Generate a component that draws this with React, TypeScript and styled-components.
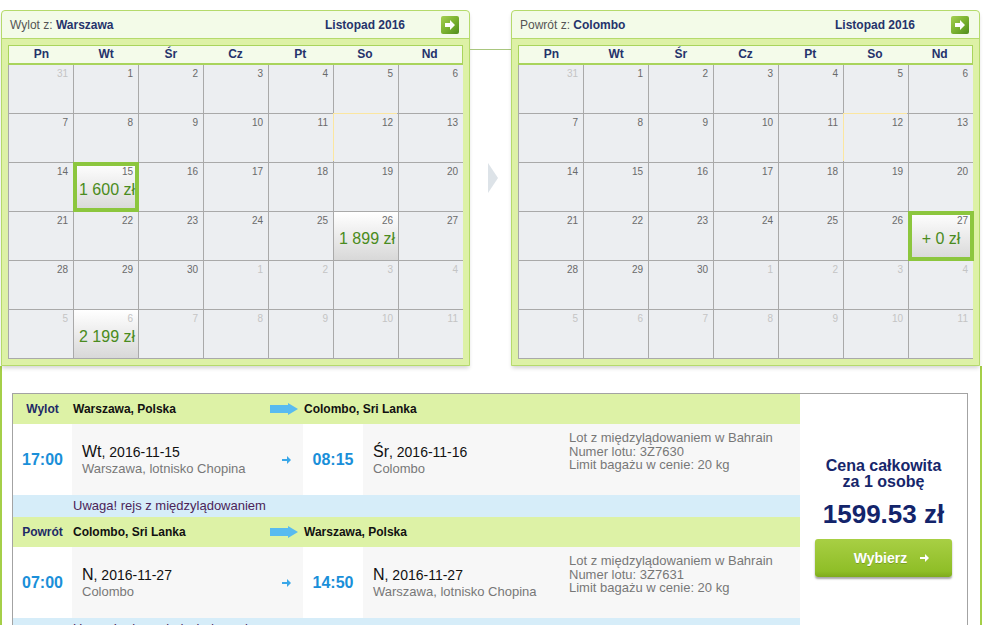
import React from 'react';
import styled, { createGlobalStyle } from 'styled-components';

const GlobalStyle = createGlobalStyle`
  body {
    margin: 0;
    background: #fff;
    font-family: "Liberation Sans", Arial, sans-serif;
  }
`

type Cell = {
  day: number
  other?: boolean
  price?: string
  selected?: boolean
  mark?: boolean
}

function buildMonth(prices: Record<string, { price: string; selected?: boolean }>): Cell[] {
  const cells: Cell[] = [{ day: 31, other: true }]
  for (let d = 1; d <= 30; d++) cells.push({ day: d, mark: d === 12 })
  for (let d = 1; d <= 11; d++) cells.push({ day: d, other: true })
  return cells.map((c) => {
    const key = (c.other ? 'o' : '') + c.day
    const p = prices[key]
    return p ? { ...c, price: p.price, selected: p.selected } : c
  })
}

const departCells = buildMonth({
  '15': { price: '1 600 zł', selected: true },
  '26': { price: '1 899 zł' },
  o6: { price: '2 199 zł' },
})

const returnCells = buildMonth({
  '27': { price: '+ 0 zł', selected: true },
})

const weekDays = ['Pn', 'Wt', 'Śr', 'Cz', 'Pt', 'So', 'Nd']

const Page = styled.div`
  width: 984px;
`

const CalendarsRow = styled.div`
  display: flex;
  align-items: flex-start;
  padding: 10px 0 0 1px;
`

const Panel = styled.div`
  width: 469px;
  box-sizing: border-box;
  border: 1px solid #b5da6c;
  border-radius: 4px 4px 0 0;
  background: #ddf1a6;
  box-shadow: 0 3px 4px -1px rgba(0, 0, 0, 0.18);
`

const PanelHeader = styled.div`
  display: flex;
  align-items: center;
  height: 27px;
  padding: 0 10px 0 8px;
  background: #f3fbe8;
  border-bottom: 1px solid #b5da6c;
  border-radius: 4px 4px 0 0;
`

const Title = styled.div`
  flex: 1;
  font-size: 12px;
  color: #555;

  b {
    color: #25336b;
  }
`

const Month = styled.div`
  font-size: 12px;
  font-weight: bold;
  color: #25336b;
  margin-right: 36px;
`

const NextButton = styled.div`
  width: 18px;
  height: 18px;
  border-radius: 2px;
  background: linear-gradient(135deg, #a6d052 0%, #7bb231 50%, #4f8d1c 100%);
  display: flex;
  align-items: center;
  justify-content: center;
`

const PanelBody = styled.div`
  padding: 6px;
`

const WeekHeader = styled.div`
  display: grid;
  grid-template-columns: repeat(7, 1fr);
  border: 1px solid #a9d45c;
  border-bottom-width: 2px;
  background: #f4fbea;
  height: 17px;
`

const WeekDay = styled.div`
  text-align: center;
  font-size: 12px;
  line-height: 17px;
  font-weight: bold;
  color: #25336b;
`

const DaysGrid = styled.div`
  display: grid;
  grid-template-columns: repeat(7, 64px);
  grid-auto-rows: 48px;
  gap: 1px;
  background: #a9a9a9;
  border: 1px solid #a9a9a9;
  border-top: 0;
`

const Day = styled.div<{ $selected?: boolean; $priced?: boolean; $mark?: boolean }>`
  display: flex;
  flex-direction: column;
  padding: 3px 5px 0;
  background: ${(p) => (p.$priced ? 'linear-gradient(#ffffff, #d8d8d8)' : '#eceef1')};
  box-shadow: ${(p) =>
    p.$selected
      ? '0 0 0 1px #8cc63e, inset 0 0 0 3px #8cc63e'
      : p.$mark
        ? '-1px -1px 0 #fbe6a0'
        : 'none'};
`

const DayNum = styled.div<{ $other?: boolean }>`
  text-align: right;
  font-size: 10px;
  line-height: 12px;
  color: ${(p) => (p.$other ? '#c4c4c4' : '#6a6a6a')};
`

const Price = styled.div`
  margin-top: 3px;
  text-align: center;
  font-size: 16px;
  line-height: 18px;
  color: #4a8b20;
  white-space: nowrap;
`

const Connector = styled.div`
  width: 41px;
  padding-top: 39px;
`

const ConnectorLine = styled.div`
  height: 1px;
  background: #a9c67f;
`

const Chevron = styled.svg`
  display: block;
  margin: 113px 0 0 18px;
`

const Results = styled.div`
  width: 982px;
  box-sizing: border-box;
  border-left: 2px solid #a5cf48;
  border-right: 2px solid #a5cf48;
  padding: 27px 12px 0 10px;
`

const FlightBox = styled.div`
  display: grid;
  grid-template-columns: 1fr 167px;
  border: 1px solid #a3a3a3;
  background: #fff;
`

const Legs = styled.div`
  display: flex;
  flex-direction: column;
`

const legCols = '59px 231px 60px 1fr'

const HeaderRow = styled.div`
  display: grid;
  grid-template-columns: ${legCols};
  align-items: center;
  height: 30px;
  background: #ddf2a6;
  font-size: 12px;
  font-weight: bold;
  color: #111;
`

const LegLabel = styled.div`
  text-align: center;
  color: #1e2a66;
`

const FromCity = styled.div`
  display: flex;
  align-items: center;
  justify-content: space-between;
  padding: 0 5px 0 1px;
`

const ToCity = styled.div`
  grid-column: 3 / 5;
  padding-left: 1px;
`

const DetailRow = styled.div`
  display: grid;
  grid-template-columns: ${legCols};
  height: 71px;
`

const Time = styled.div`
  display: flex;
  align-items: center;
  justify-content: center;
  font-size: 16px;
  font-weight: bold;
  color: #1a8fd9;
  background: #fff;
`

const Stop = styled.div`
  display: flex;
  align-items: center;
  justify-content: space-between;
  padding: 0 12px 0 10px;
  background: #f7f7f7;
`

const ArrivalStop = styled.div`
  display: flex;
  padding-left: 10px;
  background: #f7f7f7;
`

const DateBlock = styled.div`
  align-self: center;
  width: 196px;
  flex-shrink: 0;
`

const DateLine = styled.div`
  font-size: 14px;
  line-height: 18px;
  color: #111;

  span {
    font-size: 16px;
  }
`

const Place = styled.div`
  font-size: 13px;
  line-height: 15px;
  color: #777;
`

const Info = styled.div`
  padding-top: 7px;
  font-size: 13px;
  line-height: 13.6px;
  color: #777;
`

const NoticeRow = styled.div`
  height: 22px;
  line-height: 22px;
  padding-left: 60px;
  background: #d6edf9;
  font-size: 13px;
  color: #4b2458;
`

const PricePanel = styled.div`
  display: flex;
  flex-direction: column;
  align-items: center;
  justify-content: center;
  background: #fff;
`

const PriceLabel = styled.div`
  font-size: 16px;
  line-height: 16px;
  font-weight: bold;
  text-align: center;
  color: #16266b;
`

const Total = styled.div`
  margin-top: 9px;
  font-size: 26px;
  line-height: 30px;
  font-weight: bold;
  color: #13246b;
`

const ChooseButton = styled.div`
  margin-top: 10px;
  width: 137px;
  height: 38px;
  box-sizing: border-box;
  display: flex;
  align-items: center;
  justify-content: center;
  gap: 13px;
  padding-left: 16px;
  border-radius: 3px;
  background: linear-gradient(#a8cf44, #8fbe27 85%, #7eab1c);
  box-shadow: 0 2px 2px rgba(0, 0, 0, 0.35);
  color: #fff;
  font-size: 14px;
  font-weight: bold;
  text-shadow: 0 1px 0 rgba(0, 0, 0, 0.2);
`

const WhiteArrow = () => (
  <svg width="18" height="18" viewBox="0 0 18 18">
    <path d="M4 7h5V4l5 5-5 5v-3H4z" fill="#fff" />
  </svg>
)

const BigArrow = () => (
  <svg width="28" height="12" viewBox="0 0 28 12">
    <path d="M0 2h18V0l10 6-10 6v-2H0z" fill="#58bbf0" />
  </svg>
)

const SmallArrow = ({ color }: { color: string }) => (
  <svg width="9" height="8" viewBox="0 0 9 8">
    <path d="M0 3h5V0l4 4-4 4V5H0z" fill={color} />
  </svg>
)

function Calendar({ label, city, cells }: { label: string; city: string; cells: Cell[] }) {
  return (
    <Panel>
      <PanelHeader>
        <Title>
          {label} <b>{city}</b>
        </Title>
        <Month>Listopad 2016</Month>
        <NextButton>
          <WhiteArrow />
        </NextButton>
      </PanelHeader>
      <PanelBody>
        <WeekHeader>
          {weekDays.map((d) => (
            <WeekDay key={d}>{d}</WeekDay>
          ))}
        </WeekHeader>
        <DaysGrid>
          {cells.map((c, i) => (
            <Day key={i} $selected={c.selected} $priced={!!c.price} $mark={c.mark}>
              <DayNum $other={c.other}>{c.day}</DayNum>
              {c.price && <Price>{c.price}</Price>}
            </Day>
          ))}
        </DaysGrid>
      </PanelBody>
    </Panel>
  )
}

type Leg = {
  label: string
  from: string
  to: string
  depTime: string
  depDay: string
  depDate: string
  depPlace: string
  arrTime: string
  arrDay: string
  arrDate: string
  arrPlace: string
  flight: string
}

const legs: Leg[] = [
  {
    label: 'Wylot',
    from: 'Warszawa, Polska',
    to: 'Colombo, Sri Lanka',
    depTime: '17:00',
    depDay: 'Wt',
    depDate: '2016-11-15',
    depPlace: 'Warszawa, lotnisko Chopina',
    arrTime: '08:15',
    arrDay: 'Śr',
    arrDate: '2016-11-16',
    arrPlace: 'Colombo',
    flight: '3Z7630',
  },
  {
    label: 'Powrót',
    from: 'Colombo, Sri Lanka',
    to: 'Warszawa, Polska',
    depTime: '07:00',
    depDay: 'N',
    depDate: '2016-11-27',
    depPlace: 'Colombo',
    arrTime: '14:50',
    arrDay: 'N',
    arrDate: '2016-11-27',
    arrPlace: 'Warszawa, lotnisko Chopina',
    flight: '3Z7631',
  },
]

export default function App() {
  return (
    <Page>
      <GlobalStyle />
      <CalendarsRow>
        <Calendar label="Wylot z:" city="Warszawa" cells={departCells} />
        <Connector>
          <ConnectorLine />
          <Chevron width="10" height="30" viewBox="0 0 10 30">
            <polygon points="0,0 10,15 0,30" fill="#dde3e8" />
          </Chevron>
        </Connector>
        <Calendar label="Powrót z:" city="Colombo" cells={returnCells} />
      </CalendarsRow>
      <Results>
        <FlightBox>
          <Legs>
            {legs.map((l) => (
              <React.Fragment key={l.label}>
                <HeaderRow>
                  <LegLabel>{l.label}</LegLabel>
                  <FromCity>
                    {l.from}
                    <BigArrow />
                  </FromCity>
                  <ToCity>{l.to}</ToCity>
                </HeaderRow>
                <DetailRow>
                  <Time>{l.depTime}</Time>
                  <Stop>
                    <div>
                      <DateLine>
                        <span>{l.depDay}</span>, {l.depDate}
                      </DateLine>
                      <Place>{l.depPlace}</Place>
                    </div>
                    <SmallArrow color="#3aa7e8" />
                  </Stop>
                  <Time>{l.arrTime}</Time>
                  <ArrivalStop>
                    <DateBlock>
                      <DateLine>
                        <span>{l.arrDay}</span>, {l.arrDate}
                      </DateLine>
                      <Place>{l.arrPlace}</Place>
                    </DateBlock>
                    <Info>
                      Lot z międzylądowaniem w Bahrain
                      <br />
                      Numer lotu: {l.flight}
                      <br />
                      Limit bagażu w cenie: 20 kg
                    </Info>
                  </ArrivalStop>
                </DetailRow>
                <NoticeRow>Uwaga! rejs z międzylądowaniem</NoticeRow>
              </React.Fragment>
            ))}
          </Legs>
          <PricePanel>
            <PriceLabel>
              Cena całkowita
              <br />
              za 1 osobę
            </PriceLabel>
            <Total>1599.53 zł</Total>
            <ChooseButton>
              Wybierz
              <SmallArrow color="#fff" />
            </ChooseButton>
          </PricePanel>
        </FlightBox>
      </Results>
    </Page>
  )
}
